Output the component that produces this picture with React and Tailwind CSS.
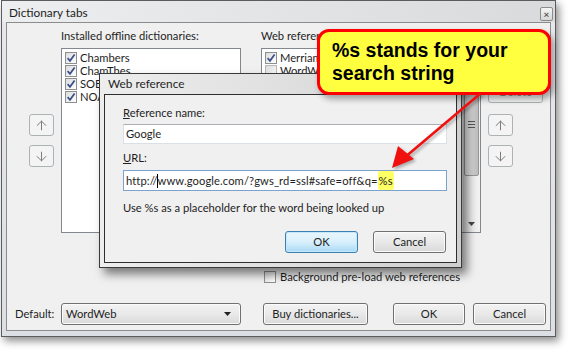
import { ArrowUp, ArrowDown } from 'lucide-react';

const btn =
  'border border-[#707070] rounded-[3px] bg-linear-to-b from-[#f3f3f3] via-[#e9e9e9] to-[#d9d9d9] shadow-[inset_0_0_0_1px_#fbfbfb] flex items-center justify-center text-[#1e1e1e]';

function Check({ checked, faded }) {
  return (
    <span
      className={`w-[12px] h-[12px] shrink-0 border ${faded ? 'border-[#b9b9b9]' : 'border-[#8e8f8f]'} bg-linear-to-br from-[#dcdcdc] to-white flex items-center justify-center`}
    >
      {checked && (
        <svg width="10" height="10" viewBox="0 0 10 10">
          <path d="M1.6 5.2 L4 7.8 L8.6 1.4" fill="none" stroke="#3a4f8a" strokeWidth="1.7" />
        </svg>
      )}
    </span>
  );
}

function ArrowBtn({ dir }) {
  const Icon = dir === 'up' ? ArrowUp : ArrowDown;
  return (
    <div className="w-[25px] h-[22px] border border-[#adb2b5] rounded-[3px] bg-[#f4f4f4] flex items-center justify-center">
      <Icon size={15} strokeWidth={1.6} color="#7c7c7c" />
    </div>
  );
}

function Row({ checked, label, faded }) {
  return (
    <div className="h-[13px] flex items-center gap-[3px] pl-[3px] whitespace-nowrap">
      <Check checked={checked} faded={faded} />
      <span>{label}</span>
    </div>
  );
}

export default function App() {
  return (
    <div className="w-[572px] h-[350px] bg-white relative overflow-hidden font-['Lato','Noto_Sans',sans-serif] text-[11.2px] leading-[16px] text-[#1e1e1e]">
      {/* Main window */}
      <div className="ml-[1px] w-[555px] h-[337px] border border-[#5c5c5c] bg-linear-to-b from-[#e6e8eb] to-[#dcdfe3] shadow-[3px_4px_8px_rgba(0,0,0,0.45)] flex flex-col">
        <div className="h-[21px] flex items-center justify-between pl-[7px] pr-[2px] bg-linear-to-r from-[#eceef0] via-[#e3e4e6] to-[#d9dadc]">
          <span className="text-[11.8px] pt-[3px]">Dictionary tabs</span>
          <div className="w-[13px] h-[14px] mt-[5px] border border-[#8b8b8b] rounded-[2px] bg-linear-to-b from-[#f5f5f5] to-[#d7d7d7] flex items-center justify-center text-[10px] leading-none font-bold text-[#555]">
            ×
          </div>
        </div>

        {/* Client */}
        <div className="mx-[4px] h-[309px] border border-[#8c8c8c] bg-[#f0f0f0] flex flex-col">
          <div className="flex pt-[5px]">
            <div className="w-[54px] pl-[22px] pt-[86px] flex flex-col gap-[9px]">
              <ArrowBtn dir="up" />
              <ArrowBtn dir="down" />
            </div>
            <div className="w-[180px] flex flex-col">
              <span className="h-[16px] whitespace-nowrap">Installed offline dictionaries:</span>
              <div className="mt-[4px] h-[185px] border border-[#828790] bg-white pt-[2px] flex flex-col">
                <Row checked label="Chambers" />
                <Row checked label="ChamThes" />
                <Row checked label="SOED" />
                <Row checked label="NOAD" />
              </div>
            </div>
            <div className="w-[220px] ml-[20px] flex flex-col">
              <span className="h-[16px] whitespace-nowrap">Web references:</span>
              <div className="mt-[4px] h-[185px] border border-[#828790] bg-white flex">
                <div className="flex-1 pt-[2px] flex flex-col overflow-hidden">
                  <Row checked label="Merriam-Webster" />
                  <Row faded label="WordWeb Online" />
                </div>
                <div className="w-[17px] bg-linear-to-r from-[#e3e3e3] to-[#f3f3f3] flex flex-col">
                  <div className="h-[127px] mx-[1px] border border-[#979797] rounded-[2px] bg-linear-to-r from-[#e9e9e9] via-[#d4d4d4] to-[#bcbcbc] flex items-end justify-center pb-[47px]">
                    <div className="flex flex-col gap-[2px]">
                      <div className="w-[7px] h-[1px] bg-[#555]" />
                      <div className="w-[7px] h-[1px] bg-[#555]" />
                      <div className="w-[7px] h-[1px] bg-[#555]" />
                    </div>
                  </div>
                  <div className="flex-1" />
                  <div className="h-[17px] flex items-center justify-center">
                    <svg width="7" height="4" viewBox="0 0 7 4">
                      <path d="M0 0 H7 L3.5 4 Z" fill="#444" />
                    </svg>
                  </div>
                </div>
              </div>
            </div>
            <div className="w-[55px] ml-[7px] flex flex-col">
              <div className={`${btn} mt-[23px] h-[22px]`}>New...</div>
              <div className="mt-[8px] h-[22px] border border-[#adb2b5] rounded-[3px] bg-[#f4f4f4] flex items-center justify-center text-[#8d8d8d]">
                Delete
              </div>
              <div className="mt-[11px] flex flex-col gap-[9px]">
                <ArrowBtn dir="up" />
                <ArrowBtn dir="down" />
              </div>
            </div>
          </div>

          <div className="mt-[36px] pl-[257px] flex items-center gap-[4px]">
            <Check />
            <span>Background pre-load web references</span>
          </div>

          <div className="mt-[18px] flex items-center">
            <span className="w-[54px] pl-[8px]">Default:</span>
            <div className={`${btn} w-[180px] h-[22px] justify-between! pl-[4px] pr-[9px]`}>
              <span>WordWeb</span>
              <svg width="7" height="4" viewBox="0 0 7 4">
                <path d="M0 0 H7 L3.5 4 Z" fill="#222" />
              </svg>
            </div>
            <div className={`${btn} ml-[22px] w-[105px] h-[22px]`}>Buy dictionaries...</div>
            <div className={`${btn} ml-[25px] w-[72px] h-[22px]`}>OK</div>
            <div className={`${btn} ml-[8px] w-[73px] h-[22px]`}>Cancel</div>
          </div>
        </div>
      </div>

      {/* Web reference dialog */}
      <div className="absolute left-[99px] top-[73px] w-[363px] h-[195px] border border-[#3a3a3a] bg-linear-to-r from-[#ededed] via-[#e0e0e0] to-[#cfcfcf] shadow-[5px_6px_9px_rgba(0,0,0,0.5)] flex flex-col">
        <div className="h-[20px] pl-[8px] flex items-center">
          <span className="text-[11.8px]">Web reference</span>
        </div>
        <div className="mx-[4px] flex-1 mb-[4px] border border-[#2e2e2e] bg-[#f0f0f0] flex flex-col pl-[18px] pr-[10px] pt-[10px]">
          <span>
            <u>R</u>eference name:
          </span>
          <div className="mt-[3px] w-[324px] h-[20px] border border-[#dbdfe6] border-t-[#abadb3] bg-white flex items-center pl-[2px]">
            Google
          </div>
          <span className="mt-[6px]">
            <u>U</u>RL:
          </span>
          <div className="mt-[4px] w-[324px] h-[21px] border border-[#7da2ce] bg-white flex items-center pl-[2px] whitespace-nowrap tracking-[0.1px]">
            <span>http://</span>
            <span className="w-[1px] h-[14px] bg-black -mx-[0.5px]" />
            <span>www.google.com/?gws_rd=ssl#safe=off&amp;q=</span>
            <span className="bg-[#ffff66] h-[19px] flex items-center px-[1px] rounded-[2px]">%s</span>
          </div>
          <span className="mt-[9px]">Use %s as a placeholder for the word being looked up</span>
          <div className="mt-[15px] flex justify-end gap-[15px]">
            <div className="w-[73px] h-[22px] border border-[#3c7fb1] rounded-[3px] bg-linear-to-b from-[#eaf6fd] via-[#d9f0fc] to-[#a7d9f5] shadow-[inset_0_0_0_1px_#c5e8fb] flex items-center justify-center">
              OK
            </div>
            <div className={`${btn} w-[73px] h-[22px]`}>Cancel</div>
          </div>
        </div>
      </div>

      {/* Callout */}
      <div className="absolute left-[317px] top-[29px] w-[234px] h-[66px] rounded-[12px] border-[3px] border-[#ff0000] bg-[#ffff40] shadow-[3px_4px_6px_rgba(0,0,0,0.35)] pl-[12px] pt-[7px] font-['Liberation_Sans',Arial,sans-serif] font-bold text-[19.5px] leading-[23px] text-black">
        %s stands for your
        <br />
        search string
      </div>

      {/* Arrow */}
      <svg className="absolute left-0 top-0 pointer-events-none" width="572" height="350" viewBox="0 0 572 350">
        <g style={{ filter: 'drop-shadow(2px 2px 1.5px rgba(0,0,0,0.3))' }}>
          <line x1="481" y1="93" x2="404" y2="158" stroke="#f01010" strokeWidth="2.6" />
          <polygon points="392,168 398,146 414,159" fill="#f01010" />
        </g>
      </svg>
    </div>
  );
}
